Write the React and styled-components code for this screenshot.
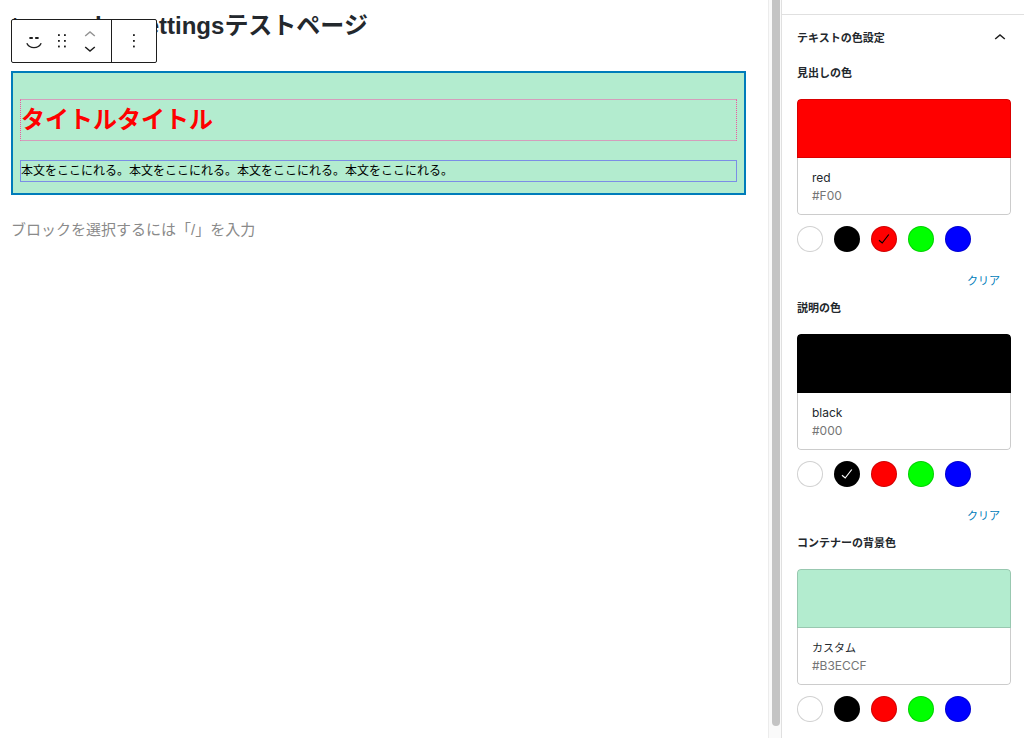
import React, { useState } from "react";
import styled, { createGlobalStyle } from "styled-components";

const GlobalStyle = createGlobalStyle`
  *, *::before, *::after { box-sizing: border-box; }
  body {
    margin: 0;
    background: #fff;
    color: #23282d;
    font-family: "Liberation Sans", "Noto Sans CJK JP", sans-serif;
  }
  h1, h2, h3, p { margin: 0; }
  button { font: inherit; color: inherit; padding: 0; border: 0; background: none; cursor: pointer; }
`;

const Page = styled.div`
  display: flex;
  height: 100vh;
  overflow: hidden;
`;

const Editor = styled.main`
  position: relative;
  flex: 1;
  min-width: 0;
  padding: 8px 22px 0 11px;
`;

const PostTitle = styled.h1`
  font-size: 24px;
  line-height: 36px;
  font-weight: 700;
  margin-bottom: 27px;
`;

const Toolbar = styled.div`
  position: absolute;
  top: 19px;
  left: 11px;
  display: flex;
  height: 44px;
  border: 1px solid #1e1e1e;
  border-radius: 2px;
  background: #fff;
`;

const ToolGroup = styled.div`
  display: flex;
  align-items: center;
  padding: 0 8px;
  & + & { border-left: 1px solid #1e1e1e; }
  &:first-child { padding-right: 7px; }
`;

const ToolButton = styled.button`
  display: flex;
  align-items: center;
  justify-content: center;
  width: 28px;
  height: ${(p) => (p.$half ? 15 : 28)}px;
`;

const Movers = styled.div`
  display: flex;
  flex-direction: column;
`;

const Block = styled.section`
  border: 2px solid #007cba;
  background: #b3eccf;
  padding: 26px 7px 11px;
`;

const BlockHeading = styled.h2`
  border: 1px solid #d49ebc;
  border-left: 1px dotted #f0569f;
  border-right: 1px dotted #f0569f;
  margin-bottom: 19px;
  font-size: 24px;
  line-height: 40px;
  color: #f00;
`;

const BlockText = styled.p`
  border: 1px solid #7b8ee6;
  font-size: 12px;
  line-height: 20px;
  color: #000;
`;

const Prompt = styled.p`
  margin-top: 24px;
  font-size: 15px;
  line-height: 22px;
  color: #8a8a8a;
`;

const ScrollTrack = styled.div`
  display: flex;
  width: 13px;
  padding: 0 1px 12px 3px;
  border-left: 1px solid #ececec;
  background: #fafafa;
`;

const ScrollThumb = styled.div`
  flex: 1;
  border-radius: 0 0 4px 4px;
  background: #c4c4c4;
`;

const Sidebar = styled.aside`
  width: 243px;
  border-left: 1px solid #e0e0e0;
  padding-top: 14px;
`;

const Panel = styled.section`
  border-top: 1px solid #e0e0e0;
  padding: 0 13px 0 15px;
`;

const PanelToggle = styled.button`
  display: flex;
  align-items: center;
  justify-content: space-between;
  width: 100%;
  height: 44px;
  padding-right: 5px;
  font-size: 11px;
  font-weight: 700;
`;

const Settings = styled.div`
  padding-top: 6px;
`;

const Setting = styled.fieldset`
  margin: 0;
  padding: 0;
  border: 0;
  min-width: 0;
`;

const SettingLabel = styled.legend`
  padding: 0 0 18px;
  font-size: 11px;
  line-height: 16px;
  font-weight: 700;
`;

const ColorCard = styled.button`
  display: block;
  width: 100%;
  border-radius: 4px;
  overflow: hidden;
  text-align: left;
`;

const Swatch = styled.div`
  height: 59px;
  border: 1px solid rgba(0, 0, 0, 0.15);
  border-radius: 4px 4px 0 0;
  background: ${(p) => p.$color};
`;

const ColorInfo = styled.div`
  height: 57px;
  padding: 11px 14px 0;
  border: 1px solid #ccc;
  border-top: 0;
  border-radius: 0 0 4px 4px;
  line-height: 18px;
`;

const ColorName = styled.div`
  font-family: Inter, "Noto Sans CJK JP", sans-serif;
  font-size: ${(p) => (p.$kana ? 11 : 12)}px;
`;

const ColorHex = styled.div`
  font-family: Inter, sans-serif;
  font-size: 12px;
  color: #757575;
`;

const Palette = styled.div`
  display: flex;
  gap: 11px;
  margin-top: 11px;
`;

const Dot = styled.label`
  display: flex;
  align-items: center;
  justify-content: center;
  width: 26px;
  height: 26px;
  border: 1px solid rgba(0, 0, 0, 0.18);
  border-radius: 50%;
  background: ${(p) => p.$color};
  color: ${(p) => p.$check};
  cursor: pointer;
`;

const DotInput = styled.input`
  appearance: none;
  width: 0;
  height: 0;
  margin: 0;
`;

const ClearRow = styled.div`
  display: flex;
  justify-content: flex-end;
  margin: 21px 11px 11px 0;
`;

const ClearButton = styled.button`
  font-size: 11px;
  line-height: 16px;
  color: #007cba;
`;

const COLORS = [
  { name: "white", hex: "#FFF", check: "#000" },
  { name: "black", hex: "#000", check: "#fff" },
  { name: "red", hex: "#F00", check: "#000" },
  { name: "lime", hex: "#0F0", check: "#000" },
  { name: "blue", hex: "#00F", check: "#fff" },
];

const Chevron = ({ up, color = "#1e1e1e" }) => (
  <svg width="12" height="6" viewBox="0 0 12 6" fill="none" stroke={color} strokeWidth="1.5">
    <path d={up ? "M1.2 5 6 1l4.8 4" : "M1.2 1 6 5l4.8-4"} />
  </svg>
);

const Dots = ({ cols }) => (
  <svg width="10" height="16" viewBox="0 0 10 16" fill="#1e1e1e">
    {cols.map((x) => [1.2, 7, 12.6].map((y) => <rect key={`${x}-${y}`} x={x} y={y} width="1.8" height="1.8" />))}
  </svg>
);

const Smile = () => (
  <svg width="16" height="20" viewBox="0 0 16 20" fill="none" stroke="#1e1e1e">
    <path d="M.8 12.2C2.2 15 4.700 16.600 8 16.600s5.800-1.600 7.200-4.400" strokeWidth="1.4" />
    <path d="M3.400 7h3.400M9.200 7h3.400" strokeWidth="2" />
  </svg>
);

const Check = () => (
  <svg width="12" height="12" viewBox="0 0 12 12" fill="none" stroke="currentColor" strokeWidth="1.2">
    <path d="M1 7.200 4.200 10 10.800 1.500" />
  </svg>
);

function ColorSetting({ id, label, initial, custom }) {
  const [hex, setHex] = useState(initial);
  const match = COLORS.find((c) => c.hex === hex);
  return (
    <Setting>
      <SettingLabel>{label}</SettingLabel>
      <ColorCard type="button">
        <Swatch $color={hex} />
        <ColorInfo>
          <ColorName $kana={!match}>{match ? match.name : "カスタム"}</ColorName>
          <ColorHex>{hex}</ColorHex>
        </ColorInfo>
      </ColorCard>
      <Palette>
        {COLORS.map((c) => (
          <Dot key={c.name} $color={c.hex} $check={c.check}>
            <DotInput
              type="radio"
              name={id}
              aria-label={c.name}
              checked={c.hex === hex}
              onChange={() => setHex(c.hex)}
            />
            {c.hex === hex && <Check />}
          </Dot>
        ))}
      </Palette>
      {!custom && (
        <ClearRow>
          <ClearButton type="button" onClick={() => setHex("#FFF")}>クリア</ClearButton>
        </ClearRow>
      )}
    </Setting>
  );
}

export default function App() {
  return (
    <Page lang="ja">
      <GlobalStyle />
      <Editor>
        <PostTitle>type color settingsテストページ</PostTitle>
        <Toolbar role="toolbar">
          <ToolGroup>
            <ToolButton type="button" aria-label="block"><Smile /></ToolButton>
            <ToolButton type="button" aria-label="drag"><Dots cols={[1, 7]} /></ToolButton>
            <Movers>
              <ToolButton type="button" $half aria-label="up"><Chevron up color="#949494" /></ToolButton>
              <ToolButton type="button" $half aria-label="down"><Chevron /></ToolButton>
            </Movers>
          </ToolGroup>
          <ToolGroup>
            <ToolButton type="button" aria-label="options"><Dots cols={[4]} /></ToolButton>
          </ToolGroup>
        </Toolbar>
        <Block>
          <BlockHeading>タイトルタイトル</BlockHeading>
          <BlockText>本文をここにれる。本文をここにれる。本文をここにれる。本文をここにれる。</BlockText>
        </Block>
        <Prompt>ブロックを選択するには「/」を入力</Prompt>
      </Editor>
      <ScrollTrack><ScrollThumb /></ScrollTrack>
      <Sidebar>
        <Panel>
          <PanelToggle type="button">
            テキストの色設定
            <Chevron up />
          </PanelToggle>
          <Settings>
            <ColorSetting id="heading" label="見出しの色" initial="#F00" />
            <ColorSetting id="text" label="説明の色" initial="#000" />
            <ColorSetting id="background" label="コンテナーの背景色" initial="#B3ECCF" custom />
          </Settings>
        </Panel>
      </Sidebar>
    </Page>
  );
}
